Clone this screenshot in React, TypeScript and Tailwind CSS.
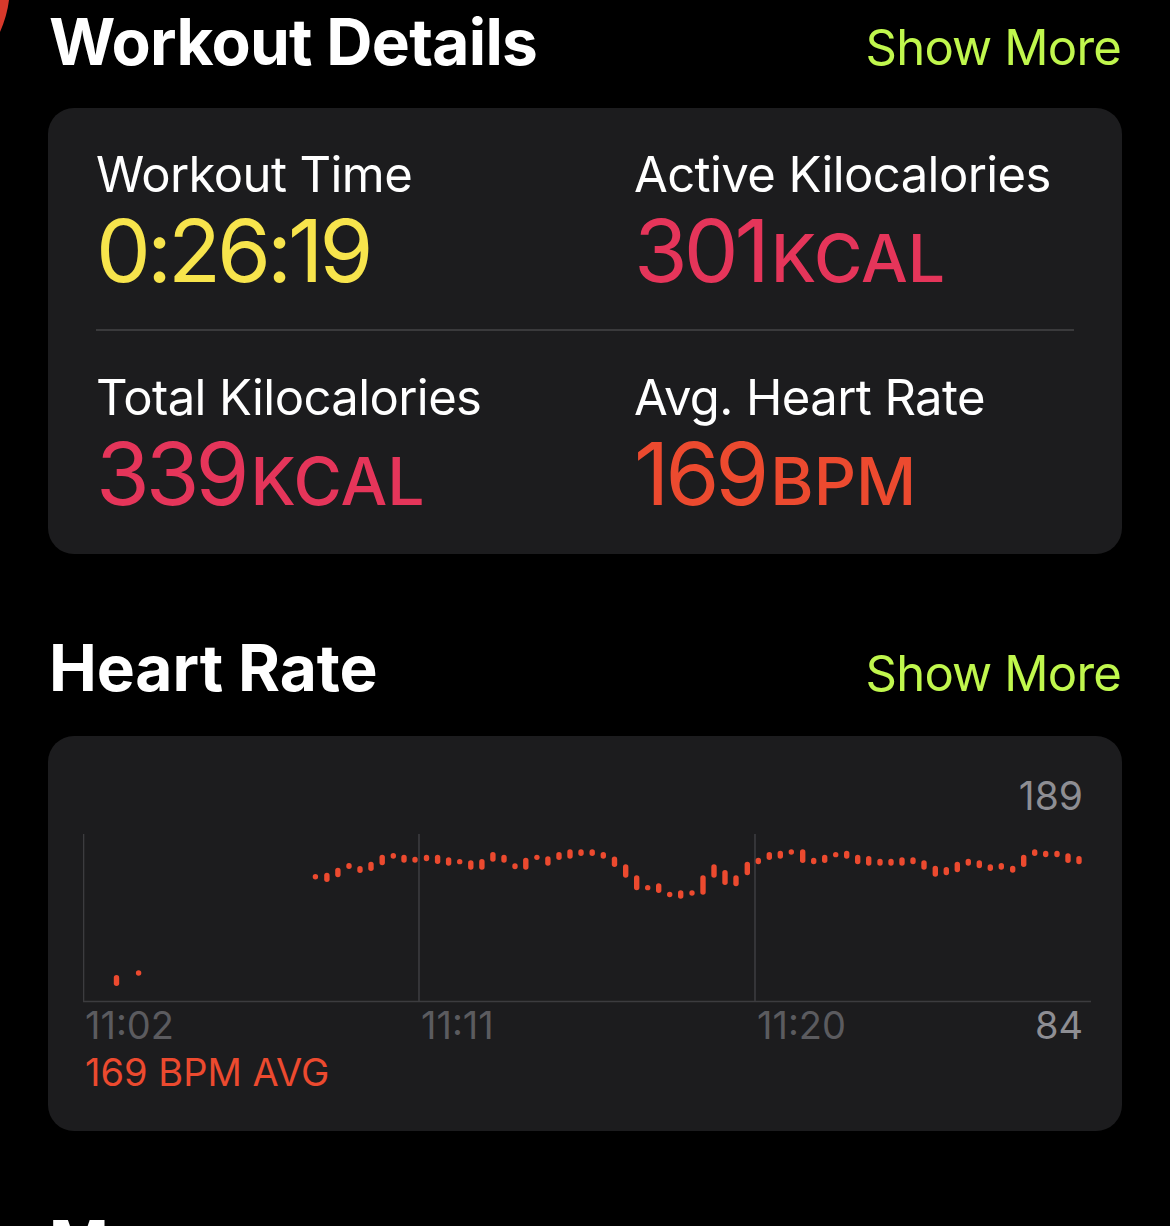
import React from "react";

const HR: [number, number, number][] = [
  [117.5, 975, 986],
  [139.6, 970.7, 975.3],
  [316.4, 874, 879.4],
  [327.9, 872.7, 882],
  [338.9, 867.7, 877.3],
  [350, 863, 869],
  [361, 866, 873],
  [372, 861.7, 871],
  [383.2, 854.7, 865.3],
  [394.3, 853, 858.7],
  [405, 854.7, 862.7],
  [416, 856.7, 862.7],
  [427.5, 854.7, 861.3],
  [438.6, 854.7, 864],
  [449.6, 857.3, 865.7],
  [460.7, 859.3, 864],
  [471.8, 860.3, 869.7],
  [482.9, 859, 869.7],
  [493.9, 852, 861.7],
  [505, 854.7, 862.7],
  [516, 863.3, 869.3],
  [526.8, 857.7, 869.7],
  [537.9, 854.7, 860],
  [548.9, 856.3, 865.7],
  [560, 852, 860],
  [571, 849.3, 858.7],
  [582, 849.3, 856],
  [593.2, 849.3, 856],
  [604.3, 852, 858.7],
  [615.5, 856.5, 867],
  [626.7, 864.3, 877.7],
  [637.7, 875.3, 890.3],
  [648.7, 885, 890.3],
  [659.7, 883.3, 893],
  [670.7, 891.7, 897.3],
  [681.7, 890.3, 898.7],
  [693, 890.3, 895.7],
  [704, 875.3, 894.7],
  [715, 864.3, 877.7],
  [726, 870, 885],
  [737, 875.3, 886.3],
  [748.3, 861.7, 875.3],
  [759.3, 857.7, 864.3],
  [770.3, 852, 860],
  [781.3, 850.7, 858.7],
  [792.3, 849.3, 854.7],
  [803.7, 849.3, 863],
  [814.7, 857.7, 864.3],
  [825.7, 854.7, 863],
  [836.7, 852, 857.3],
  [847.7, 850.7, 858.7],
  [858.7, 854.7, 864.3],
  [869.7, 856, 865.7],
  [881, 858.7, 865.7],
  [892, 858.7, 865.7],
  [903, 857.3, 865.7],
  [914, 857.3, 864.3],
  [925, 860.3, 869.7],
  [936.3, 865.7, 876.7],
  [947.3, 867, 875.3],
  [958.3, 861.7, 872.3],
  [969.3, 858.7, 865.7],
  [980.3, 860.3, 868.3],
  [991.3, 864.3, 871],
  [1002.3, 863, 869.7],
  [1013.7, 865.7, 872.7],
  [1024.7, 854.7, 867],
  [1035.7, 849.3, 856],
  [1046.7, 850.7, 857.3],
  [1058, 850.7, 857.3],
  [1069, 853.3, 863],
  [1080, 856, 864.3],
];

function SectionHeader({ title, tight }: { title: string; tight?: boolean }) {
  return (
    <div className="flex h-[64px] items-baseline justify-between pl-[49px] pr-[49px]">
      <h2
        className={`text-[64px] leading-[64px] font-bold text-white ${
          tight ? "tracking-[-0.7px]" : "tracking-[-0.1px]"
        }`}
      >
        {title}
      </h2>
      <span className="text-[49px] leading-[49px] tracking-[-0.8px] text-[#c0f74d]">Show More</span>
    </div>
  );
}

function Metric({
  label,
  value,
  unit,
  color,
}: {
  label: string;
  value: string;
  unit?: string;
  color: string;
}) {
  return (
    <div className="flex flex-col gap-[8px]">
      <div className="text-[49px] leading-[49px] tracking-[-0.6px] text-white">{label}</div>
      <div className={`h-[87px] text-[87px] leading-[87px] whitespace-nowrap ${color}`}>
        <span className="tracking-[-4px]">{value}</span>
        {unit ? (
          <span className="ml-[5px] text-[66px] leading-[66px] font-medium">{unit}</span>
        ) : null}
      </div>
    </div>
  );
}

function HeartChart() {
  const sw = 5.4;
  const r = sw / 2;
  return (
    <svg width={1010} height={191} viewBox="84 815 1010 191" className="block ml-[35px]">
      <line x1={84.5} y1={834} x2={84.5} y2={1002} stroke="#3c3c3f" strokeWidth={1.6} />
      <line x1={420} y1={834} x2={420} y2={1002} stroke="#3c3c3f" strokeWidth={1.6} />
      <line x1={756} y1={834} x2={756} y2={1002} stroke="#3c3c3f" strokeWidth={1.6} />
      <line x1={84} y1={1001.5} x2={1092} y2={1001.5} stroke="#3c3c3f" strokeWidth={1.6} />
      {HR.map(([x, a, b], i) => {
        let y1 = a + r;
        let y2 = b - r;
        if (y2 < y1) {
          const c = (a + b) / 2;
          y1 = c;
          y2 = c;
        }
        return (
          <line
            key={i}
            x1={x}
            y1={y1}
            x2={x}
            y2={y2}
            stroke="#ec4a2f"
            strokeWidth={sw}
            strokeLinecap="round"
          />
        );
      })}
    </svg>
  );
}

export default function App() {
  return (
    <div className="relative w-[1170px] h-[1226px] overflow-hidden bg-black font-['Inter',sans-serif]">
      <svg width="12" height="34" viewBox="0 0 12 34" className="absolute left-0 top-0">
        <path d="M0 0 L9 0 Q7 16 0 32 Z" fill="#d8392b" />
      </svg>

      <div className="pt-[10px]">
        <SectionHeader title="Workout Details" tight />
      </div>

      <div className="mx-[48px] mt-[34px] rounded-[26px] bg-[#1c1c1e] pt-[42px] pb-[37px]">
        <div className="grid grid-cols-[538px_1fr] pl-[48px]">
          <Metric label="Workout Time" value="0:26:19" color="text-[#f7e44c]" />
          <Metric label="Active Kilocalories" value="301" unit="KCAL" color="text-[#e5355a]" />
        </div>
        <div className="mx-[48px] mt-[35px] mb-[42px] h-[1.5px] bg-[#3a3a3c]" />
        <div className="grid grid-cols-[538px_1fr] pl-[48px]">
          <Metric label="Total Kilocalories" value="339" unit="KCAL" color="text-[#e5355a]" />
          <Metric label="Avg. Heart Rate" value="169" unit="BPM" color="text-[#ec4a2f]" />
        </div>
      </div>

      <div className="mt-[82px]">
        <SectionHeader title="Heart Rate" />
      </div>

      <div className="mx-[48px] mt-[36px] rounded-[26px] bg-[#1c1c1e] pt-[40px] pb-[40px]">
        <div className="flex justify-end pr-[39px] text-[39px] leading-[39px] text-[#8e8e93]">189</div>
        <HeartChart />
        <div className="grid grid-cols-[336px_336px_1fr] ml-[37px] mr-[39px] text-[38px] leading-[38px]">
          <span className="text-[#5b5b5f]">11:02</span>
          <span className="text-[#5b5b5f]">11:11</span>
          <div className="flex justify-between">
            <span className="text-[#5b5b5f]">11:20</span>
            <span className="text-[#8e8e93]">84</span>
          </div>
        </div>
        <div className="ml-[37px] mt-[9px] text-[38px] leading-[38px] text-[#ec4a2f]">169 BPM AVG</div>
      </div>

      <div className="mt-[81px] pl-[49px]">
        <h2 className="text-[64px] leading-[64px] font-bold text-white">Map</h2>
      </div>
    </div>
  );
}
